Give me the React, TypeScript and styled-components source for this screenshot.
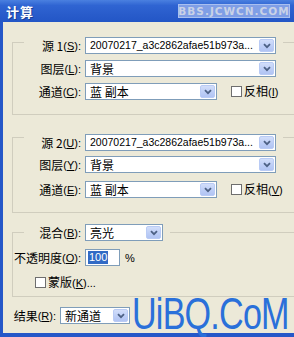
import React from 'react';
import styled, { createGlobalStyle } from 'styled-components';

const GlobalStyle = createGlobalStyle`
  html, body {
    margin: 0;
    padding: 0;
    background: #ece9d8;
  }
  body {
    font-family: "Liberation Sans", "Noto Sans CJK SC", sans-serif;
    font-size: 12px;
    color: #000;
  }
`;

const SOURCE_FILE = '20070217_a3c2862afae51b973a...';

function Chevron() {
  return (
    <svg width="8" height="6" viewBox="0 0 8 6">
      <path d="M1 1.2 L4 4.2 L7 1.2" fill="none" stroke="#4d6185" strokeWidth="1.8" />
    </svg>
  );
}

type SelectProps = { value: string; width: number; mono?: boolean };

function Select({ value, width, mono = false }: SelectProps) {
  return (
    <StyledSelect $width={width}>
      <SelectText $mono={mono}>{value}</SelectText>
      <ArrowButton>
        <Chevron />
      </ArrowButton>
    </StyledSelect>
  );
}

type FieldLabelProps = { text: string; accel: string; width: number };

function FieldLabel({ text, accel, width }: FieldLabelProps) {
  return (
    <StyledLabel $width={width}>
      {text}
      <Latin>
        (<u>{accel}</u>):
      </Latin>
    </StyledLabel>
  );
}

function Check({ text, accel, tail = '' }: { text: string; accel: string; tail?: string }) {
  return (
    <CheckRow>
      <CheckBox />
      <CheckText>
        {text}
        <Latin>
          (<u>{accel}</u>){tail}
        </Latin>
      </CheckText>
    </CheckRow>
  );
}

type SourceGroupProps = {
  num: number;
  keys: [string, string, string, string];
  top: number;
  padTop: number;
  gaps: [number, number];
};

function SourceGroup({ num, keys, top, padTop, gaps }: SourceGroupProps) {
  const [srcKey, layerKey, chanKey, invKey] = keys;
  return (
    <Group $top={top} $bottom={14}>
      <Legend $padTop={padTop}>
        <FieldLabel text={`源 ${num}`} accel={srcKey} width={57} />
        <Select value={SOURCE_FILE} width={191} mono />
      </Legend>
      <Row $top={gaps[0]}>
        <FieldLabel text="图层" accel={layerKey} width={57} />
        <Select value="背景" width={191} />
      </Row>
      <Row $top={gaps[1]}>
        <FieldLabel text="通道" accel={chanKey} width={57} />
        <Select value="蓝 副本" width={132} />
        <Spacer $w={6} />
        <Check text="反相" accel={invKey} />
      </Row>
    </Group>
  );
}

export default function App() {
  return (
    <>
      <GlobalStyle />
      <Window>
        <TitleBar>
          <Title>计算</Title>
          <TitleMark>BBS.JCWCN.COM</TitleMark>
        </TitleBar>
        <Body>
          <SourceGroup num={1} keys={['S', 'L', 'C', 'I']} top={8} padTop={7} gaps={[6, 6]} />
          <SourceGroup num={2} keys={['U', 'Y', 'E', 'V']} top={9} padTop={10} gaps={[5, 8]} />
          <Group $top={11} $bottom={6}>
            <Legend $padTop={0}>
              <FieldLabel text="混合" accel="B" width={57} />
              <Select value="亮光" width={78} />
            </Legend>
            <Row $top={8}>
              <FieldLabel text="不透明度" accel="O" width={57} />
              <OpacityInput>
                <Selected>100</Selected>
              </OpacityInput>
              <Percent>%</Percent>
            </Row>
            <Row $top={9} $indent={22}>
              <Check text="蒙版" accel="K" tail="..." />
            </Row>
          </Group>
          <ResultRow>
            <FieldLabel text="结果" accel="R" width={39} />
            <Select value="新通道" width={70} />
          </ResultRow>
        </Body>
        <Watermark>UiBQ.CoM</Watermark>
      </Window>
    </>
  );
}

const Window = styled.div`
  position: relative;
  width: 294px;
  height: 337px;
  overflow: hidden;
  display: flex;
  flex-direction: column;
  background: #ece9d8;
`;

const TitleBar = styled.div`
  height: 22px;
  flex-shrink: 0;
  display: flex;
  align-items: center;
  justify-content: space-between;
  padding: 0 4px 0 6px;
  background: linear-gradient(to bottom, #4a80e0 0%, #2f64d2 25%, #285bca 70%, #2356c6 100%);
`;

const Title = styled.span`
  color: #ffffff;
  font-family: "Noto Sans CJK SC", sans-serif;
  font-weight: bold;
  font-size: 13px;
  letter-spacing: 1px;
  text-shadow: 1px 1px 0 #1a3f96;
`;

const TitleMark = styled.span`
  width: 112px;
  height: 14px;
  box-sizing: border-box;
  display: flex;
  align-items: center;
  justify-content: center;
  background: #7f9ee6;
  border: 1px solid #a9c0f0;
  color: #c9d2e6;
  font-family: "DejaVu Sans", sans-serif;
  font-weight: bold;
  font-size: 10.5px;
  letter-spacing: 1px;
`;

const Body = styled.div`
  flex: 1;
  display: flex;
  flex-direction: column;
  align-items: flex-start;
  padding: 0 0 0 9px;
  border-left: 3px solid #2557c8;
  border-bottom: 4px solid #2557c8;
`;

const Group = styled.fieldset<{ $top: number; $bottom: number }>`
  width: 300px;
  min-width: 0;
  box-sizing: border-box;
  margin: ${({ $top }) => $top}px 0 0 0;
  padding: 0 0 ${({ $bottom }) => $bottom}px 0;
  border: 1px solid #d0cdbe;
`;

const Legend = styled.legend<{ $padTop: number }>`
  display: flex;
  align-items: center;
  gap: 4px;
  margin-left: 11px;
  padding: ${({ $padTop }) => $padTop}px 7px 0 0;
`;

const Row = styled.div<{ $top: number; $indent?: number }>`
  display: flex;
  align-items: center;
  gap: 4px;
  margin-top: ${({ $top }) => $top}px;
  padding-left: ${({ $indent = 11 }) => $indent}px;
`;

const ResultRow = styled.div`
  display: flex;
  align-items: center;
  gap: 4px;
  margin-top: 10px;
  padding-left: 5px;
`;

const StyledLabel = styled.span<{ $width: number }>`
  width: ${({ $width }) => $width}px;
  flex-shrink: 0;
  display: flex;
  justify-content: flex-end;
  white-space: nowrap;
  font-family: "Noto Sans CJK SC", sans-serif;
  font-size: 12px;
  line-height: 14px;
`;

const Latin = styled.span`
  font-family: "Liberation Sans", sans-serif;
  font-size: 11px;
  u {
    text-underline-offset: 1px;
  }
`;

const StyledSelect = styled.div<{ $width: number }>`
  width: ${({ $width }) => $width}px;
  height: 17px;
  flex-shrink: 0;
  box-sizing: border-box;
  display: flex;
  align-items: center;
  justify-content: space-between;
  padding: 1px;
  background: #ffffff;
  border: 1px solid #7f9db9;
`;

const SelectText = styled.span<{ $mono: boolean }>`
  padding-left: 3px;
  white-space: nowrap;
  font-family: ${({ $mono }) => ($mono ? '"Liberation Sans", sans-serif' : '"Noto Sans CJK SC", sans-serif')};
  font-size: ${({ $mono }) => ($mono ? '10.5px' : '12px')};
  line-height: 13px;
`;

const ArrowButton = styled.span`
  width: 15px;
  height: 13px;
  flex-shrink: 0;
  display: flex;
  align-items: center;
  justify-content: center;
  box-sizing: border-box;
  background: linear-gradient(to bottom, #d2defa 0%, #bccdf6 60%, #b1c4f3 100%);
  border: 1px solid #b9cbf5;
  border-radius: 2px;
`;

const Spacer = styled.span<{ $w: number }>`
  width: ${({ $w }) => $w}px;
  flex-shrink: 0;
`;

const CheckRow = styled.span`
  display: flex;
  align-items: center;
  gap: 2px;
  white-space: nowrap;
`;

const CheckBox = styled.span`
  width: 11px;
  height: 11px;
  box-sizing: border-box;
  background: #ffffff;
  border: 1px solid #6e6e6e;
`;

const CheckText = styled.span`
  font-family: "Noto Sans CJK SC", sans-serif;
  font-size: 12px;
  line-height: 14px;
`;

const OpacityInput = styled.span`
  width: 35px;
  height: 17px;
  box-sizing: border-box;
  display: flex;
  align-items: center;
  padding-left: 2px;
  background: #ffffff;
  border: 1px solid #7f9db9;
`;

const Selected = styled.span`
  background: #316ac5;
  color: #ffffff;
  font-family: "Liberation Sans", sans-serif;
  font-size: 11px;
  line-height: 13px;
  padding: 0 1px;
`;

const Percent = styled.span`
  margin-left: 1px;
  font-family: "Liberation Sans", sans-serif;
  font-size: 11px;
`;

const Watermark = styled.span`
  position: absolute;
  left: 132px;
  top: 291px;
  color: #2a70da;
  font-family: "Liberation Sans", sans-serif;
  font-size: 44px;
  line-height: 46px;
  letter-spacing: -1px;
  transform: scaleX(0.775);
  transform-origin: left center;
  white-space: nowrap;
`;
